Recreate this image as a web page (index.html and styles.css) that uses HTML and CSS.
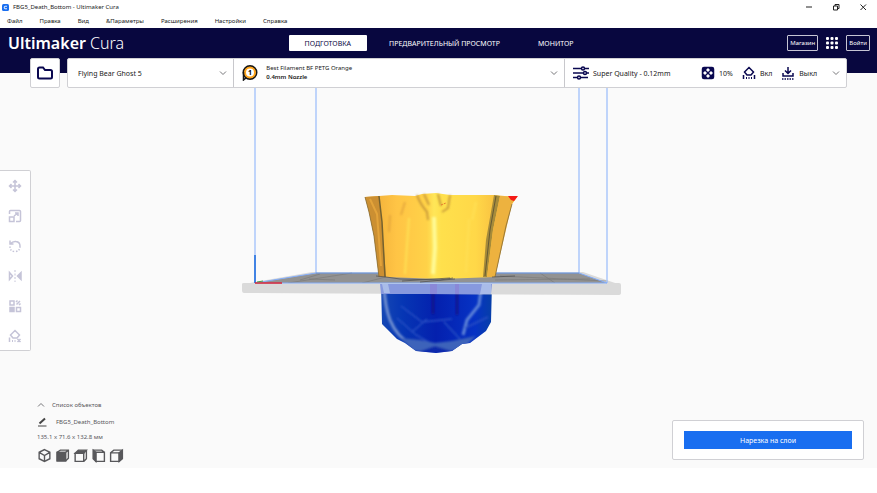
FILE: index.html
```
<!DOCTYPE html>
<html lang="ru">
<head>
  <meta charset="UTF-8" />
  <meta name="viewport" content="width=device-width, initial-scale=1.0" />
  <title>FBG5_Death_Bottom - Ultimaker Cura</title>
  <link rel="stylesheet" href="styles.css">
</head>
<body>
  <div class="titlebar">
    <svg class="app-icon" viewBox="0 0 14 14"><rect width="14" height="14" rx="3" fill="#196ef0"/><path d="M10 4.500H6Q4.500 4.500 4.500 6V8Q4.500 9.500 6 9.500H10" fill="none" stroke="#fff" stroke-width="1.800"/></svg>
    <span class="window-title">FBG5_Death_Bottom - Ultimaker Cura</span>
    <div class="window-buttons">
      <button aria-label="Свернуть"><svg viewBox="0 0 10 10"><path d="M2 5H8"/></svg></button>
      <button aria-label="Восстановить"><svg viewBox="0 0 10 10"><path d="M2.500 4H6.500V8H2.500ZM4 4V2.500H8V6.500H6.500"/></svg></button>
      <button aria-label="Закрыть"><svg viewBox="0 0 10 10"><path d="M2.500 2.500L8 8M8 2.500L2.500 8"/></svg></button>
    </div>
  </div>

  <nav class="menubar">
    <a href="#">Файл</a>
    <a href="#">Правка</a>
    <a href="#">Вид</a>
    <a href="#">&amp;Параметры</a>
    <a href="#">Расширения</a>
    <a href="#">Настройки</a>
    <a href="#">Справка</a>
  </nav>

  <header class="header">
    <div class="logo"><b>Ultimaker</b> Cura</div>
    <nav class="stages">
      <button class="stage active">ПОДГОТОВКА</button>
      <button class="stage">ПРЕДВАРИТЕЛЬНЫЙ ПРОСМОТР</button>
      <button class="stage">МОНИТОР</button>
    </nav>
    <div class="account">
      <button class="outline">Магазин</button>
      <button class="apps" aria-label="Приложения">
        <svg viewBox="0 0 12 12" fill="#fff"><rect width="3" height="3" rx="1"/><rect x="4.500" width="3" height="3" rx="1"/><rect x="9" width="3" height="3" rx="1"/><rect y="4.500" width="3" height="3" rx="1"/><rect x="4.500" y="4.500" width="3" height="3" rx="1"/><rect x="9" y="4.500" width="3" height="3" rx="1"/><rect y="9" width="3" height="3" rx="1"/><rect x="4.500" y="9" width="3" height="3" rx="1"/><rect x="9" y="9" width="3" height="3" rx="1"/></svg>
      </button>
      <button class="outline">Войти</button>
    </div>
  </header>

  <main class="workspace">
    <svg class="scene" viewBox="0 73 877 395" aria-hidden="true">
      <defs>
        <linearGradient id="gold" x1="378" x2="500" y1="0" y2="0" gradientUnits="userSpaceOnUse">
          <stop offset="0" stop-color="#f4b43c"/>
          <stop offset="0.150" stop-color="#ffc445"/>
          <stop offset="0.400" stop-color="#ffd248"/>
          <stop offset="0.460" stop-color="#ffe658"/>
          <stop offset="0.520" stop-color="#ffe04c"/>
          <stop offset="0.800" stop-color="#ffd848"/>
          <stop offset="1" stop-color="#f8bd40"/>
        </linearGradient>
        <linearGradient id="blue" x1="380" x2="492" y1="0" y2="0" gradientUnits="userSpaceOnUse">
          <stop offset="0" stop-color="#1648b4"/>
          <stop offset="0.200" stop-color="#0636b4"/>
          <stop offset="0.500" stop-color="#0420ae"/>
          <stop offset="0.850" stop-color="#0632c4"/>
          <stop offset="1" stop-color="#063fa8"/>
        </linearGradient>
        <filter id="soft" x="-20%" y="-20%" width="140%" height="140%"><feGaussianBlur stdDeviation="1.200"/></filter>
        <clipPath id="hull"><path d="M381 283H492L491 322L486 331L470 343L462 344L452 351L436 353L416 351L405 343L397 339L382 324Z"/></clipPath>
      </defs>

      <!-- build plate -->
      <path d="M255 282L312 272H583L618 284H245Z" fill="#dadada"/>
      <path d="M255 283L316 273H579L607 283Z" fill="#929292"/>
      <path d="M288 283L352 273M362 283L390 276M500 276L606 281M540 273L555 283M495 280L590 279M309 279L335 280M320 274L300 280" fill="none" stroke="#777" stroke-width="0.600"/>

      <!-- part below the plate -->
      <path d="M381 283H492L491 322L486 331L470 343L462 344L452 351L436 353L416 351L405 343L397 339L382 324Z" fill="url(#blue)"/>
      <g clip-path="url(#hull)" fill="none" filter="url(#soft)">
        <path d="M384 286Q385 307 390 320Q397 337 411 344" stroke="#718fd0" stroke-width="3"/>
        <path d="M481 290L479 305L467 320L463 335" stroke="#5f84d8" stroke-width="3"/>
        <path d="M397 318L416 335L435 346M412 332L427 319M422 322L452 319M465 328L488 317M444 322L460 339M401 306L422 322" stroke="#2a50c4" stroke-width="1.500"/>
        <path d="M433 290V314M457 289V315" stroke="#120f84" stroke-width="2"/>
        <path d="M400 338L420 340L435 343L452 341L476 336L463 348L452 351H414Z" fill="#3e63ba"/>
        <path d="M418 352L435 346L455 352Z" fill="#0b2cab"/>
      </g>
      <path d="M242 284Q242 283 244 283H619Q621 283 621 285V293Q621 295 618 295L244 293Q242 293 242 290Z" fill="#dadada"/>
      <path d="M380 284H492L491 294H381Z" fill="#8799de"/>
      <path d="M382 284H388L390 293H384ZM482 284H491V294H480Z" fill="#a9bce9"/>
      <path d="M430 284H437V294H430ZM455 284H459V294H455Z" fill="#8a88d8"/>

      <!-- build volume -->
      <path d="M255 72V283H607V72M316 72V273M579 72V273L607 283M316 273L255 283" fill="none" stroke="#84aefb"/>
      <path d="M316 273H579" stroke="#6498ef"/>

      <!-- part above the plate -->
      <path d="M365 197L379 196L392 195L415 196L422 194L436 193L450 195L494 195L517 197L512 204L506 226L495 277L440 279L386 277H379L374 236L369 212Z" fill="url(#gold)"/>
      <path d="M365 197L379 196L382 225L386 277H379L374 236L369 212Z" fill="#cb8f32"/>
      <path d="M370 199L377 214L381 266" fill="none" stroke="#e3a33a" stroke-width="2"/>
      <path d="M379 196L382 222L385 277" fill="none" stroke="#74612f" stroke-width="1.500"/>
      <path d="M494 195L500 196L493 230L487 277H483L486 240Z" fill="#a68b3a"/>
      <path d="M500 196L517 197L512 204L495 277H487L493 230Z" fill="#edb23f"/>
      <path d="M496 196L490 230L485 276" fill="none" stroke="#655a34"/>
      <g fill="none" filter="url(#soft)">
        <path d="M417 195Q420 204 427 212L428 220M424 194L429 205M438 194L441 206M450 195L448 208L442 212" stroke="#b98a35" stroke-width="1.500"/>
        <path d="M390 215L389 232M405 202L401 215" stroke="#e0a23a" stroke-width="1.500"/>
        <path d="M434 217L435 248L433 274" stroke="#fff994" stroke-width="4"/>
        <path d="M409 218L405 274M469 219L466 273M476 202L472 220" stroke="#ffdf52" stroke-width="2"/>
      </g>
      <path d="M441 205L446 203" stroke="#e7772c" stroke-dasharray="2 1"/>
      <path d="M508 196H518L514 201L511 200Z" fill="#f51a17"/>
      <path d="M365 197L369 212L374 236L379 277M512 204L506 226L495 277" fill="none" stroke="#846b36" stroke-width="0.800"/>
      <path d="M376 276L386 277L400 279L440 280L453 278M402 281L450 278M420 282L455 279M492 277L515 276" fill="none" stroke="#555" stroke-width="0.800"/>
      <path d="M255 283V255" stroke="#1769dc" stroke-width="1.500"/>
      <path d="M255 283H282" stroke="#dc2633" stroke-width="1.500"/>
      <path d="M257 282L263 281" stroke="#4a9e48"/>
    </svg>

    <div class="topbar">
      <button class="panel open" aria-label="Открыть файл">
        <svg viewBox="0 0 16 14"><path d="M1 3Q1 1.500 2.500 1.500H6L8 4H13.500Q15 4 15 5.500V11Q15 12.500 13.500 12.500H2.500Q1 12.500 1 11Z"/></svg>
      </button>
      <div class="panel config">
        <button class="machine">
          <span>Flying Bear Ghost 5</span>
          <svg class="chevron" viewBox="0 0 8 8"><path d="M1 2.500L4 5.500L7 2.500"/></svg>
        </button>
        <button class="material">
          <svg class="spool" viewBox="0 0 16 16"><circle cx="8" cy="7.500" r="6.500" fill="#fff" stroke="#161616" stroke-width="2"/><circle cx="8" cy="7.500" r="5" fill="#fff" stroke="#ffa419" stroke-width="2"/><path d="M1.500 7V15L4 13" fill="none" stroke="#161616" stroke-width="1.500"/><text x="8" y="10" text-anchor="middle">1</text></svg>
          <span class="material-text">Best Filament BF PETG Orange<br><b>0.4mm Nozzle</b></span>
          <svg class="chevron" viewBox="0 0 8 8"><path d="M1 2.500L4 5.500L7 2.500"/></svg>
        </button>
        <button class="settings">
          <svg class="sliders" viewBox="0 0 16 14"><path d="M0 2.500H8M12 2.500H16M0 7H10M14 7H16M0 11.500H4M8 11.500H15"/><circle cx="10" cy="2.500" r="1.500"/><circle cx="12" cy="7" r="1.500"/><circle cx="6" cy="11.500" r="1.500"/></svg>
          <span class="profile">Super Quality - 0.12mm</span>
          <svg class="setting-icon" viewBox="0 0 14 14"><rect x="1.500" y="1.500" width="11" height="11" rx="1.500" fill="#0a0850"/><g fill="#fff" stroke="none"><path d="M7 2L9 4L7 6L5 4ZM7 8L9 10L7 12L5 10ZM4 5L6 7L4 9L2 7ZM10 5L12 7L10 9L8 7Z"/></g></svg>
          <span class="value">10%</span>
          <svg class="setting-icon" viewBox="0 0 14 14"><path d="M7 1.500L11.500 6L9 9H5L2.500 6ZM1.500 9V13M12.500 9V13"/><path d="M4.500 11V13M7 11V13M9.500 11V13" stroke-width="1"/></svg>
          <span class="value">Вкл</span>
          <svg class="setting-icon" viewBox="0 0 14 14"><path d="M7 1V7M4 4.500L7 7.500L10 4.500M2 7V10H12V7"/><path d="M1 13H13" stroke-dasharray="1.500 1"/></svg>
          <span class="value">Выкл</span>
          <svg class="chevron" viewBox="0 0 8 8"><path d="M1 2.500L4 5.500L7 2.500"/></svg>
        </button>
      </div>
    </div>

    <div class="tools">
      <button aria-label="Перемещение"><svg viewBox="0 0 14 14"><path d="M7 2V12M2 7H12M5 3.500L7 1.500L9 3.500M5 10.500L7 12.500L9 10.500M3.500 5L1.500 7L3.500 9M10.500 5L12.500 7L10.500 9"/></svg></button>
      <button aria-label="Масштаб"><svg viewBox="0 0 14 14"><path d="M1.500 5V2.500Q1.500 1.500 2.500 1.500H11.500Q12.500 1.500 12.500 2.500V11.500Q12.500 12.500 11.500 12.500H8M1.500 8H6V12.500H1.500ZM6 7L10 4M7 4H10V7"/></svg></button>
      <button aria-label="Вращение"><svg viewBox="0 0 14 14"><path d="M2 1.500V5H5.500M2 5Q5 2 8 2.500Q12 3 12 7"/><path d="M12 7Q12 12.500 7 12.500Q2 12.500 2 7.500" stroke-dasharray="1.500 1.500"/></svg></button>
      <button aria-label="Отражение"><svg viewBox="0 0 14 14"><path d="M1.500 3.500V10.500L4.500 7Z"/><path d="M13 3.500V10.500L9.500 7Z" fill="#c5c4d8"/><path d="M7 1V13" stroke-width="1" stroke-dasharray="2 1.500"/></svg></button>
      <button aria-label="Параметры модели"><svg viewBox="0 0 14 14"><rect x="2" y="2" width="4" height="4"/><path d="M8.500 5.500L12 2M8 3L9.500 1.500M11 6L12.500 4.500"/><rect x="2" y="8.500" width="4" height="4" fill="#c5c4d8"/><rect x="8.500" y="8.500" width="4" height="4"/></svg></button>
      <button aria-label="Блокировка поддержки"><svg viewBox="0 0 14 14"><path d="M7 1.500L11.500 6L9 9H5L2.500 6ZM1.500 8.500V13M9.500 10L12.500 13M12.500 10L9.500 13"/><path d="M4.500 11V13M7 11V13" stroke-width="1"/></svg></button>
    </div>

    <div class="footer">
      <section class="objects">
        <button class="object-list"><svg class="chevron" viewBox="0 0 8 8"><path d="M1 5.500L4 2.500L7 5.500"/></svg>Список объектов</button>
        <button class="object-name"><svg viewBox="0 0 10 10"><path d="M1 9H9.500"/><path d="M2.500 6.500L8 1.500" stroke-width="2"/></svg>FBG5_Death_Bottom</button>
        <div class="dimensions">135.1 x 71.6 x 132.8 мм</div>
        <div class="views">
          <button aria-label="3D вид"><svg viewBox="0 0 14 14"><path d="M7 1.500L12 4V10L7 12.500L2 10V4ZM2 4L7 7L12 4M7 7V12.500"/></svg></button>
          <button aria-label="Вид спереди"><svg viewBox="0 0 14 14"><path d="M2 4L5 2H12.500V9.500L10 12H2ZM10 4L12.500 2"/><rect x="2" y="4" width="8" height="8" fill="#58585b"/></svg></button>
          <button aria-label="Вид сверху"><svg viewBox="0 0 14 14"><path d="M2 5H10V12.500H2ZM10 12.500L12.500 10V2"/><path d="M2 5L5 2H12.500L10 5Z" fill="#58585b"/></svg></button>
          <button aria-label="Вид слева"><svg viewBox="0 0 14 14"><path d="M4.500 4H12.500V12.500H4.500ZM2 2H10L12.500 4"/><path d="M2 2L4.500 4V12.500L2 10Z" fill="#58585b"/></svg></button>
          <button aria-label="Вид справа"><svg viewBox="0 0 14 14"><path d="M1.500 4.500H9.500V12.500H1.500ZM1.500 4.500L4.500 2H12.500"/><path d="M9.500 4.500L12.500 2V10L9.500 12.500Z" fill="#58585b"/></svg></button>
        </div>
      </section>
      <div class="panel slice">
        <button>Нарезка на слои</button>
      </div>
    </div>
  </main>
</body>
</html>
```

FILE: styles.css
```
* {
  box-sizing: border-box;
}

body {
  margin: 0;
  min-height: 100vh;
  padding-bottom: 25px;
  display: flex;
  flex-direction: column;
  font-family: "Noto Sans", sans-serif;
  font-size: 6px;
  color: #191919;
  background: #fff;
}

button {
  padding: 0;
  border: 0;
  background: none;
  font: inherit;
  color: inherit;
  cursor: pointer;
}

svg {
  display: block;
  flex: none;
}

.titlebar {
  display: flex;
  align-items: center;
  height: 14px;
  padding: 0 9px 0 2px;
}

.app-icon {
  width: 7px;
  height: 7px;
  margin-right: 4px;
}

.window-buttons {
  display: flex;
  gap: 17px;
  margin-left: auto;
}

.window-buttons svg {
  width: 10px;
  height: 10px;
  fill: none;
  stroke: #222;
  stroke-width: 1;
}

.menubar {
  display: flex;
  align-items: center;
  gap: 17px;
  height: 14px;
  padding-left: 7px;
}

.menubar a {
  color: inherit;
  text-decoration: none;
}

.header {
  display: grid;
  grid-template-columns: 1fr auto 1fr;
  height: 45px;
  padding: 7px 7px 0 8px;
  background: #08073f;
  color: #fff;
}

.logo {
  font-size: 16px;
  line-height: 16px;
  font-weight: 300;
}

.logo b {
  font-weight: 600;
}

.stages {
  display: flex;
  gap: 6px;
}

.stage {
  height: 16px;
  padding: 0 16px;
  border-radius: 1px;
  font-size: 7px;
}

.stage.active {
  background: #fff;
  color: #08073f;
}

.account {
  display: flex;
  justify-content: flex-end;
  gap: 8px;
  height: 16px;
}

.outline {
  padding: 0 2px;
  border: 1px solid #c6c5d4;
  border-radius: 1px;
}

.apps svg {
  width: 12px;
  height: 12px;
}

.workspace {
  position: relative;
  flex: 1;
  display: flex;
  flex-direction: column;
  align-items: flex-start;
  background: #fafafa;
}

/* 3D view lies behind all the panels */
.scene {
  position: absolute;
  inset: 0;
  width: 100%;
  height: 100%;
}

.topbar,
.tools,
.footer {
  position: relative;
}

.panel {
  background: #fff;
  border: 1px solid #d0d0d4;
  border-radius: 2px;
}

.topbar {
  display: flex;
  gap: 7px;
  align-self: stretch;
  margin-top: -15px;
  padding: 0 30px;
}

.open {
  display: flex;
  align-items: center;
  justify-content: center;
  width: 30px;
  height: 30px;
}

.open svg {
  width: 16px;
  height: 14px;
  fill: none;
  stroke: #0a0850;
  stroke-width: 2;
}

.config {
  flex: 1;
  display: grid;
  grid-template-columns: 1fr 2fr 282px;
  font-size: 7px;
}

.config button {
  display: flex;
  align-items: center;
  padding: 0 6px 0 8px;
  text-align: left;
}

.config button + button {
  border-left: 1px solid #c8c8cc;
}

.config .machine {
  padding-left: 10px;
}

.chevron {
  width: 8px;
  height: 8px;
  margin-left: auto;
  fill: none;
  stroke: #77777a;
  stroke-width: 1;
}

.spool {
  width: 16px;
  height: 16px;
  margin-right: 8px;
}

.spool text {
  font-size: 7px;
  font-weight: 700;
}

.material-text {
  font-size: 6px;
  line-height: 9px;
}

.material-text b {
  font-weight: 600;
}

.sliders,
.setting-icon {
  fill: none;
  stroke: #0a0850;
  stroke-width: 1.5;
}

.sliders {
  width: 16px;
  height: 14px;
  margin-right: 4px;
}

.profile {
  margin-right: auto;
}

.setting-icon {
  width: 14px;
  height: 14px;
  margin-right: 4px;
}

.value {
  margin-right: 9px;
}

.config .settings .chevron {
  margin-left: 6px;
}

.tools {
  display: flex;
  flex-direction: column;
  gap: 1px;
  margin-top: 82px;
  background: #fff;
  border: 1px solid #d0d0d4;
  border-left: 0;
  border-radius: 0 2px 2px 0;
}

.tools button {
  display: flex;
  align-items: center;
  justify-content: center;
  width: 30px;
  height: 29px;
}

.tools svg {
  width: 14px;
  height: 14px;
  fill: none;
  stroke: #c5c4d8;
  stroke-width: 1.5;
}

.footer {
  display: flex;
  align-items: flex-end;
  justify-content: space-between;
  align-self: stretch;
  margin-top: auto;
  padding: 0 13px 5px 37px;
  color: #58585b;
}

.objects {
  display: flex;
  flex-direction: column;
  align-items: flex-start;
}

.object-list,
.object-name {
  display: flex;
  align-items: center;
  height: 17px;
}

.object-list .chevron {
  margin-right: 7px;
}

.object-name svg {
  width: 10px;
  height: 10px;
  margin-right: 9px;
  fill: none;
  stroke: #444;
  stroke-width: 1;
}

.dimensions {
  line-height: 14px;
}

.views {
  display: flex;
  gap: 3px;
  margin-top: 4px;
}

.views svg {
  width: 15px;
  height: 15px;
  fill: none;
  stroke: #58585b;
  stroke-width: 1.3;
}

.slice {
  min-width: 192px;
  margin-bottom: 3px;
  padding: 10px 11px;
}

.slice button {
  width: 100%;
  height: 18px;
  background: #196ef0;
  color: #fff;
  font-size: 7px;
}
```
